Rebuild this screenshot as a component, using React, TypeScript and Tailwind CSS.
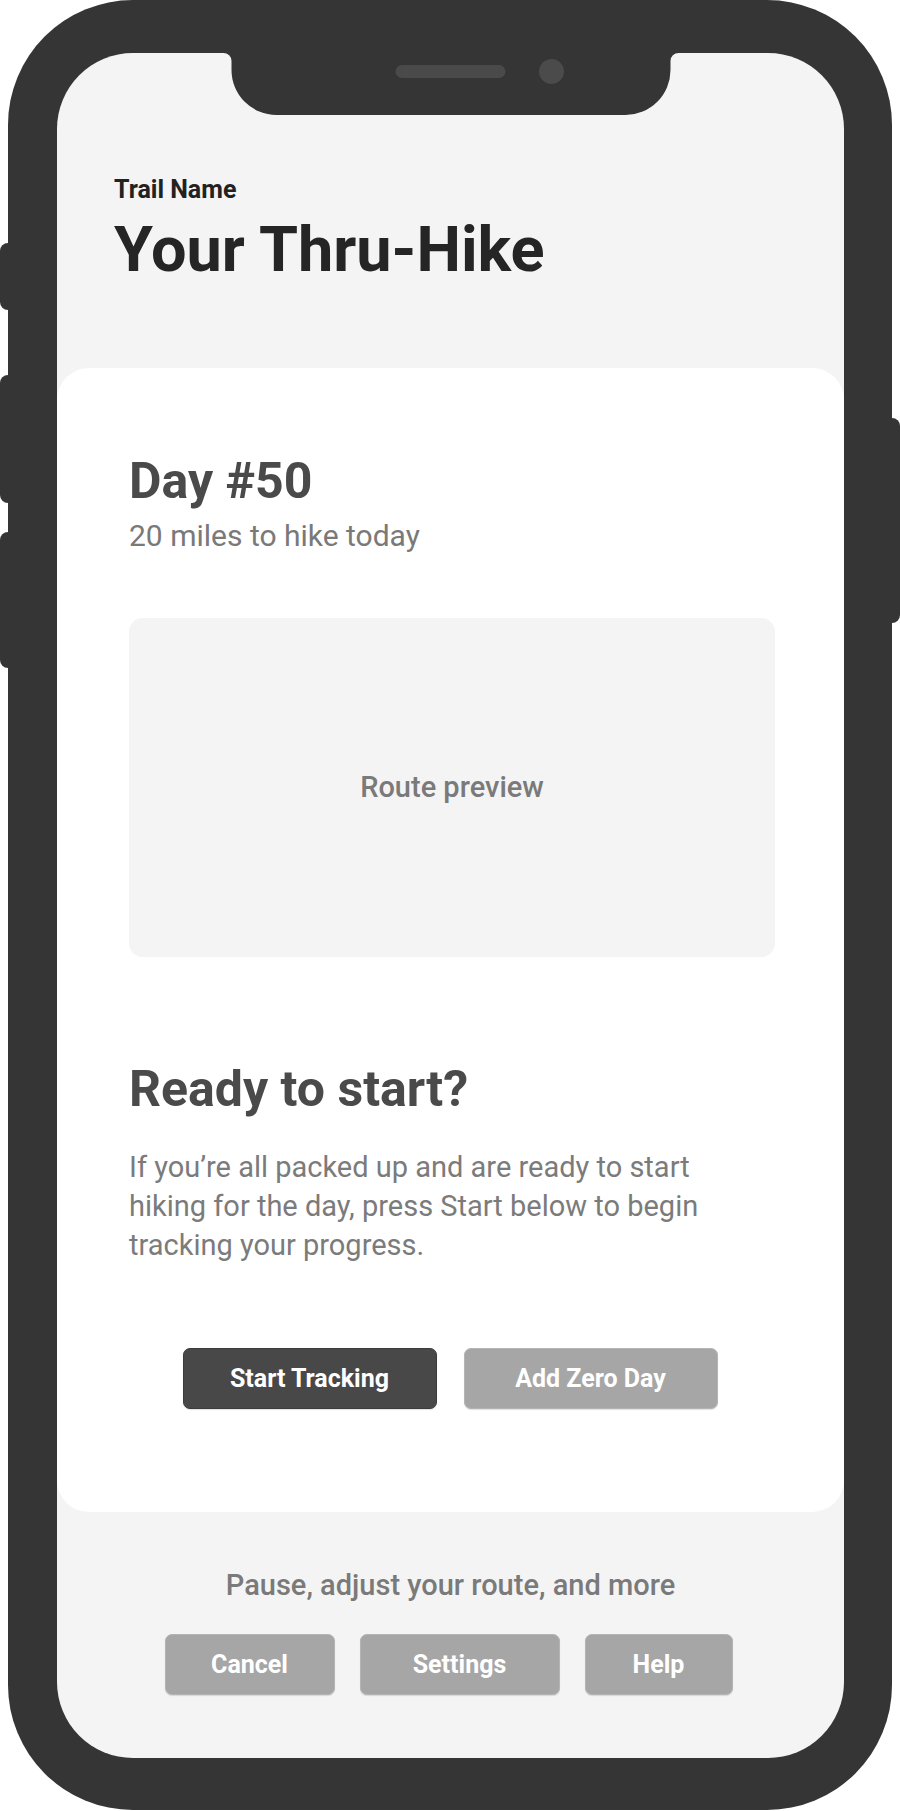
import type { ReactNode } from 'react';

function Notch() {
    return (
        <svg width="455" height="62" viewBox="0 0 455 62" className="absolute left-1/2 top-0 -translate-x-1/2">
            <path
                d="M455 0 A8 8 0 0 0 447 8 V17 A45 45 0 0 1 402 62 H53 A45 45 0 0 1 8 17 V8 A8 8 0 0 0 0 0 Z"
                fill="#353535"
            />
            <rect x="172" y="12" width="110" height="13" rx="6.5" fill="#4a4a4a" />
            <circle cx="328" cy="18.5" r="12.5" fill="#4b4b4b" />
        </svg>
    );
}

function PillButton({ children, dark, className }: { children: ReactNode; dark?: boolean; className: string }) {
    return (
        <button
            className={[
                'flex h-[61px] items-center justify-center rounded-[7px] border text-[25px] font-bold text-white shadow-[0_1px_1px_rgba(0,0,0,0.12)]',
                dark ? 'border-[#3c3c3c] bg-[#484848]' : 'border-[#b4b4b4] bg-[#a6a6a6]',
                className,
            ].join(' ')}
        >
            {children}
        </button>
    );
}

export default function App() {
    return (
        <div className="h-[1811px] w-[900px] bg-white pl-[8px]" style={{ fontFamily: 'Roboto, "Liberation Sans", sans-serif' }}>
            {/* Phone body */}
            <div className="relative h-[1810px] w-[884px] rounded-[125px] bg-[#353535] pb-[52px] pl-[49px] pr-[48px] pt-[53px]">
                {/* Side buttons */}
                <span className="absolute left-[-8px] top-[243px] h-[67px] w-[16px] rounded-l-[8px] bg-[#353535]" />
                <span className="absolute left-[-8px] top-[375px] h-[128px] w-[16px] rounded-l-[8px] bg-[#353535]" />
                <span className="absolute left-[-8px] top-[532px] h-[136px] w-[16px] rounded-l-[8px] bg-[#353535]" />
                <span className="absolute right-[-8px] top-[418px] h-[205px] w-[16px] rounded-r-[8px] bg-[#353535]" />

                {/* Screen */}
                <div className="relative flex h-full w-full flex-col overflow-hidden rounded-[76px] bg-[#f4f4f4]">
                    <Notch />

                    {/* Header */}
                    <div className="pl-[57px] pt-[123px]">
                        <p className="text-[25px] font-bold leading-[28px] text-[#222222]">Trail Name</p>
                        <h1 className="mt-[14px] text-[63px] font-bold leading-[64px] text-[#252525]">Your Thru-Hike</h1>
                    </div>

                    {/* Day card */}
                    <div className="mt-[86px] rounded-[32px] bg-white pb-[103px] pl-[72px] pr-[69px] pt-[84px]">
                        <h2 className="text-[50px] font-bold leading-[58px] text-[#4a4a4a]">Day #50</h2>
                        <p className="mt-[10px] text-[30px] leading-[32px] text-[#797979]">20 miles to hike today</p>

                        <div className="mt-[66px] flex h-[339px] items-center justify-center rounded-[14px] bg-[#f4f4f4]">
                            <span className="text-[29px] font-medium text-[#7a7a7a]">Route preview</span>
                        </div>

                        <h2 className="mt-[103px] text-[50px] font-bold leading-[58px] text-[#4a4a4a]">Ready to start?</h2>
                        <p className="mt-[30px] max-w-[620px] text-[29px] leading-[39px] text-[#7b7b7b]">
                            If you’re all packed up and are ready to start hiking for the day, press Start below to begin tracking
                            your progress.
                        </p>

                        <div className="mt-[83px] flex justify-center gap-[27px] pr-[4px]">
                            <PillButton dark className="w-[254px]">
                                Start Tracking
                            </PillButton>
                            <PillButton className="w-[254px]">Add Zero Day</PillButton>
                        </div>
                    </div>

                    {/* Footer actions */}
                    <p className="mt-[57px] text-center text-[29px] font-medium leading-[32px] text-[#7a7a7a]">
                        Pause, adjust your route, and more
                    </p>
                    <div className="mt-[33px] flex justify-center gap-[25px] pr-[4px]">
                        <PillButton className="w-[170px]">Cancel</PillButton>
                        <PillButton className="w-[200px]">Settings</PillButton>
                        <PillButton className="w-[148px]">Help</PillButton>
                    </div>
                </div>
            </div>
        </div>
    );
}
